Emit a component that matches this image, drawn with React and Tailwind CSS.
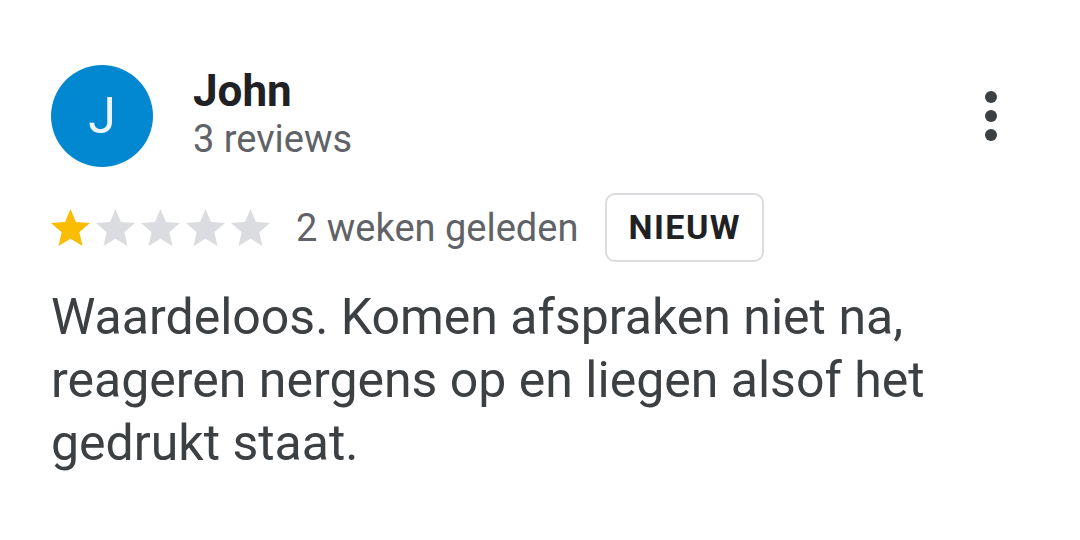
import React from "react";

function Star({ filled }) {
  return (
    <svg width="39" height="37" viewBox="2 2 20 19">
      <path
        d="M12 17.27L18.18 21l-1.64-7.03L22 9.24l-7.19-.61L12 2 9.19 8.63 2 9.24l5.46 4.73L5.82 21z"
        fill={filled ? "#fbbc04" : "#dadce0"}
      />
    </svg>
  );
}

export default function App() {
  return (
    <div className="w-[1080px] h-[540px] bg-white pl-[51px] pr-[60px] pt-[65px]" style={{ fontFamily: "Roboto, sans-serif" }}>
      <div className="flex items-start">
        <div className="w-[102px] h-[102px] rounded-full bg-[#0288d1] flex items-center justify-center text-[#eef5fb] text-[50px] leading-none">
          J
        </div>
        <div className="ml-[40px] flex flex-col pt-[2px]">
          <div className="text-[44px] font-bold leading-[48px] text-[#202124]">John</div>
          <div className="text-[38px] leading-[44px] text-[#5f6368] mt-[2px]">3 reviews</div>
        </div>
        <div className="ml-auto mr-[23px] mt-[26px] flex flex-col gap-[7px]">
          <div className="w-[12px] h-[12px] rounded-full bg-[#3c4043]" />
          <div className="w-[12px] h-[12px] rounded-full bg-[#3c4043]" />
          <div className="w-[12px] h-[12px] rounded-full bg-[#3c4043]" />
        </div>
      </div>
      <div className="flex items-center mt-[26px]">
        <div className="flex gap-[6px]">
          <Star filled />
          <Star />
          <Star />
          <Star />
          <Star />
        </div>
        <div className="ml-[26px] text-[38px] text-[#5f6368] leading-none">2 weken geleden</div>
        <div className="ml-[27px] h-[69px] px-[21px] border-2 border-[#dadce0] rounded-[10px] flex items-center text-[34px] font-bold tracking-[1.5px] text-[#202124]">
          NIEUW
        </div>
      </div>
      <div className="mt-[24px] text-[50px] leading-[63px] text-[#3c4043] w-[960px]">
        Waardeloos. Komen afspraken niet na, reageren nergens op en liegen alsof het gedrukt staat.
      </div>
    </div>
  );
}
